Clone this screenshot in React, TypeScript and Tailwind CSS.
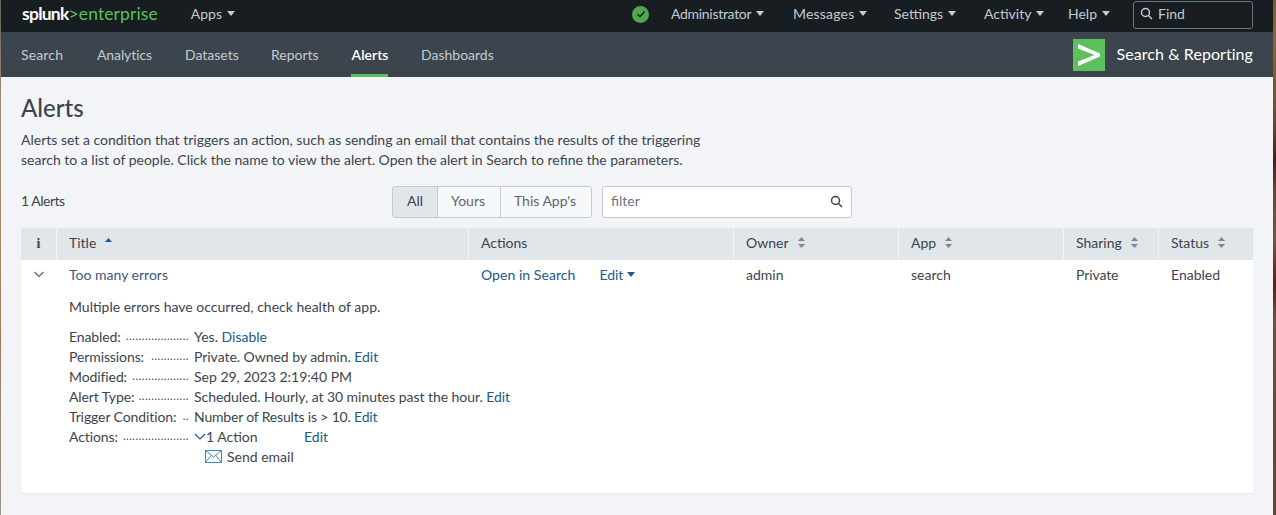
import React from "react";

const font = { fontFamily: "Lato, 'Open Sans', sans-serif" };

function Caret({ className = "" }: { className?: string }) {
  return (
    <svg width="8" height="5" viewBox="0 0 8 5" className={className}>
      <path d="M0 0 H8 L4 5 Z" fill="currentColor" />
    </svg>
  );
}

function SortIcon() {
  return (
    <svg width="7" height="11" viewBox="0 0 7 11" className="text-[#7b8794]">
      <path d="M3.5 0 L7 4 H0 Z M3.5 11 L0 7 H7 Z" fill="currentColor" />
    </svg>
  );
}

function NavItem({ label, className = "", textClass = "" }: { label: string; className?: string; textClass?: string }) {
  return (
    <div className={`flex items-center gap-[5px] pb-[4px] text-[#c3cbd4] ${className}`}>
      <span className={textClass}>{label}</span>
      <Caret />
    </div>
  );
}

function Th({ label, w, sort = true, children }: { label: string; w: string; sort?: boolean; children?: React.ReactNode }) {
  return (
    <div className={`${w} flex shrink-0 items-center gap-[9px] border-r border-[#f2f4f7] pb-[4px] pl-3 last:border-r-0`}>
      <span>{label}</span>
      {sort && <SortIcon />}
      {children}
    </div>
  );
}

function Detail({ label, dots, children, valueClass = "" }: { label: string; dots: string; children: React.ReactNode; valueClass?: string }) {
  return (
    <div className="flex h-5 items-center">
      <div className="flex w-[125px] shrink-0 justify-between overflow-hidden whitespace-nowrap">
        <span className="tracking-[-0.1px]">{label}</span>
        <span className="self-end pb-[2px] pr-[5px] text-[11px] tracking-[0.55px] text-[#3c444d]">{dots}</span>
      </div>
      <div className={`flex items-center ${valueClass}`}>{children}</div>
    </div>
  );
}

const Link = ({ children, className = "" }: { children: React.ReactNode; className?: string }) => (
  <span className={`text-[#22598a] ${className}`}>{children}</span>
);

const wallpaperRight =
  "bg-[linear-gradient(180deg,#7a5a35_0px,#8a6a30_40px,#6b4a2f_120px,#4a1f12_160px,#6a4428_190px,#7a5538_240px,#5c1f14_285px,#75503a_320px,#6b4a2f_400px,#6a4526_515px)]";
const wallpaperLeft =
  "bg-[linear-gradient(180deg,#6a6258_0px,#9a8a74_100px,#a88866_220px,#9d7a5e_340px,#97897a_420px,#9c9488_515px)]";

export default function App() {
  return (
    <div style={font} className="flex h-[515px] w-[1276px] overflow-hidden text-[14px] text-[#3c444d]">
      <div className={`w-px shrink-0 ${wallpaperLeft}`} />
      <div className="h-full w-[1272px] shrink-0 bg-[#f2f4f7]">
        <div className="flex h-8 items-center bg-[#171d21] pb-[2px] pl-[21px] pr-[20px]">
          <div className="flex items-baseline pb-[2px] text-[17.5px] leading-none">
            <span className="font-bold tracking-[-0.75px] text-white">splunk</span>
            <span className="tracking-[0.1px] text-[#5cc05c]">&gt;enterprise</span>
          </div>
          <NavItem label="Apps" className="ml-[33px]" />
          <div className="ml-auto flex items-center">
            <div className="mb-[2px] mr-[22px] flex h-[17px] w-[17px] items-center justify-center rounded-full bg-[#4fa84f]">
              <svg width="10" height="10" viewBox="0 0 10 10">
                <path d="M1.5 5.2 L4 7.7 L8.5 2.5" fill="none" stroke="#171d21" strokeWidth="1.5" />
              </svg>
            </div>
            <NavItem label="Administrator" className="w-[122px]" textClass="tracking-[-0.3px]" />
            <NavItem label="Messages" className="w-[101px]" textClass="tracking-[0.2px]" />
            <NavItem label="Settings" className="w-[90px]" />
            <NavItem label="Activity" className="w-[84px]" />
            <NavItem label="Help" className="w-[65px]" />
            <div className="flex h-7 w-[120px] items-center gap-[5px] rounded-[3px] border border-[#6b7580] pb-[4px] pl-[6px] text-[#c3cbd4]">
              <svg width="13" height="13" viewBox="0 0 13 13" fill="none" stroke="currentColor" strokeWidth="1.5">
                <circle cx="5.5" cy="5.5" r="4" />
                <path d="M8.5 8.5 L12 12" />
              </svg>
              <span>Find</span>
            </div>
          </div>
        </div>

        <div className="flex h-[45px] items-stretch bg-[#3c444d] pl-[20px] pr-[20px]">
          <div className="flex text-[#c3cbd4]">
            <div className="flex w-[76px] items-center tracking-[0.15px]">Search</div>
            <div className="flex w-[88px] items-center tracking-[-0.1px]">Analytics</div>
            <div className="flex w-[86px] items-center">Datasets</div>
            <div className="flex w-[80px] items-center">Reports</div>
            <div className="w-[70px]">
              <div className="flex h-full w-[37px] items-center justify-center border-b-[3px] border-[#5cc05c] pl-px pt-[3px] font-semibold text-white">
                Alerts
              </div>
            </div>
            <div className="flex items-center">Dashboards</div>
          </div>
          <div className="ml-auto flex items-center gap-3">
            <div className="h-8 w-8 bg-[#5cc05c]">
              <svg width="32" height="32" viewBox="0 0 32 32">
                <path d="M5 5 L27 14.5 V17.5 L5 27 V22.5 L21.5 16 L5 9.5 Z" fill="#fff" />
              </svg>
            </div>
            <span className="pb-[2px] text-[16px] tracking-[0.06px] text-white">Search &amp; Reporting</span>
          </div>
        </div>

        <div className="px-[20px]">
          <h1 className="mt-[16px] text-[24px] font-medium leading-[30px]">Alerts</h1>
          <p className="mt-[7px] w-[700px] leading-5">
            Alerts set a condition that triggers an action, such as sending an email that contains the results of the triggering search to a list of people. Click the name to view the alert. Open the alert in Search to refine the parameters.
          </p>

          <div className="mt-[16px] flex h-[32px] items-center">
            <div className="w-[371px] pb-[4px] tracking-[-0.5px]">1 Alerts</div>
            <div className="flex h-[32px] overflow-hidden rounded-[3px] border border-[#c3cbd4]">
              <div className="flex w-[44px] items-center justify-center bg-[#e1e6eb] pb-[4px]">All</div>
              <div className="flex w-[63px] items-center justify-center border-l border-[#c3cbd4] bg-[#f7f8fa] pb-[4px] pr-[2px] text-[#5c6773]">Yours</div>
              <div className="flex w-[91px] items-center justify-center border-l border-[#c3cbd4] bg-[#f7f8fa] pb-[4px] pr-[2px] text-[#5c6773]">This App's</div>
            </div>
            <div className="ml-[10px] flex h-[32px] w-[250px] items-center justify-between rounded-[3px] border border-[#c3cbd4] bg-white pb-[2px] pl-2 pr-[8px] text-[#6b7580]">
              <span className="pb-[2px]">filter</span>
              <svg width="13" height="13" viewBox="0 0 13 13" fill="none" stroke="#3c444d" strokeWidth="1.5">
                <circle cx="5.5" cy="5.5" r="4" />
                <path d="M8.5 8.5 L12 12" />
              </svg>
            </div>
          </div>

          <div className="mt-[10px] flex h-8 items-stretch bg-[#e1e6eb]">
            <div className="flex w-[36px] shrink-0 items-center justify-center border-r border-[#f2f4f7] pb-[2px] font-bold" style={{ fontFamily: "'Liberation Serif', serif" }}>i</div>
            <Th label="Title" w="w-[412px]" sort={false}>
              <svg width="7" height="4" viewBox="0 0 7 4" className="mb-[4px] text-[#1a5c8f]"><path d="M3.5 0 L7 4 H0 Z" fill="currentColor" /></svg>
            </Th>
            <Th label="Actions" w="w-[265px]" sort={false} />
            <Th label="Owner" w="w-[165px]" />
            <Th label="App" w="w-[165px]" />
            <Th label="Sharing" w="w-[95px]" />
            <Th label="Status" w="w-[94px]" />
          </div>

          <div className="h-[234px] border-b border-[#e6e9ec] bg-white">
            <div className="flex h-[30px] items-center pb-[2px]">
              <div className="flex w-[36px] shrink-0 justify-center">
                <svg width="12" height="7" viewBox="0 0 12 7" fill="none" stroke="#4a5f75" strokeWidth="1.2"><path d="M1.5 1 L6 5.5 L10.5 1" /></svg>
              </div>
              <Link className="w-[412px] shrink-0 pl-3 !text-[#3b5a7a]">Too many errors</Link>
              <div className="flex w-[265px] shrink-0 gap-6 pl-3">
                <Link className="tracking-[0.05px]">Open in Search</Link>
                <Link className="flex items-center gap-[4px]">Edit <Caret /></Link>
              </div>
              <span className="w-[165px] shrink-0 pl-3">admin</span>
              <span className="w-[165px] shrink-0 pl-3">search</span>
              <span className="w-[95px] shrink-0 pl-3 tracking-[-0.1px]">Private</span>
              <span className="w-[94px] shrink-0 pl-3">Enabled</span>
            </div>
            <div className="pl-[48px]">
              <p className="mb-[9px] mt-[7px] leading-5">Multiple errors have occurred, check health of app.</p>
              <Detail label="Enabled:" dots="....................">Yes.&nbsp;<Link>Disable</Link></Detail>
              <Detail label="Permissions:" dots="............" valueClass="tracking-[-0.04px]">Private. Owned by admin.&nbsp;<Link>Edit</Link></Detail>
              <Detail label="Modified:" dots="..................">Sep 29, 2023 2:19:40 PM</Detail>
              <Detail label="Alert Type:" dots="................" valueClass="tracking-[-0.05px]">Scheduled. Hourly, at 30 minutes past the hour.&nbsp;<Link>Edit</Link></Detail>
              <Detail label="Trigger Condition:" dots=".." valueClass="tracking-[-0.18px]">Number of Results is &gt; 10.&nbsp;<Link>Edit</Link></Detail>
              <Detail label="Actions:" dots=".....................">
                <svg width="12" height="7" viewBox="0 0 12 7" fill="none" stroke="#22598a" strokeWidth="1.2"><path d="M1 1 L6 6 L11 1" /></svg>
                <span className="w-[98px]">1 Action</span>
                <Link>Edit</Link>
              </Detail>
              <div className="flex h-5 items-center gap-[5px] pl-[136px]">
                <svg width="17" height="13" viewBox="0 0 17 13" fill="none" stroke="#3b8cc4" strokeWidth="1">
                  <rect x="0.5" y="0.5" width="16" height="12" />
                  <path d="M0.5 0.5 L8.5 7 L16.5 0.5 M0.5 12.5 L6 5.5 M16.5 12.5 L11 5.5" />
                </svg>
                <span>Send email</span>
              </div>
            </div>
          </div>
        </div>
      </div>
      <div className={`w-[3px] shrink-0 ${wallpaperRight}`} />
    </div>
  );
}
